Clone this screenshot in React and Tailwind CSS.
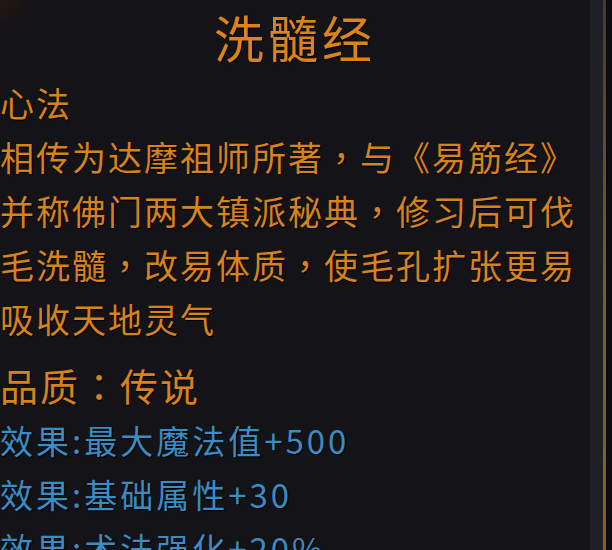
import React from 'react';

const item = {
  name: '洗髓经',
  type: '心法',
  desc: [
    '相传为达摩祖师所著，与《易筋经》',
    '并称佛门两大镇派秘典，修习后可伐',
    '毛洗髓，改易体质，使毛孔扩张更易',
    '吸收天地灵气',
  ],
  quality: '传说',
  effects: ['效果:最大魔法值+500', '效果:基础属性+30', '效果:术法强化+20%'],
};

const font = { fontFamily: '"Noto Sans CJK SC", "Noto Sans", sans-serif' };

// full-width punctuation sits centred in its cell, as in the TC face
function Punct({ text }) {
  return text.split(/([，：])/).map((part, i) =>
    part === '，' || part === '：' ? (
      <span key={i} style={{ fontFamily: '"Noto Sans CJK TC", sans-serif' }}>
        {part}
      </span>
    ) : (
      part
    )
  );
}

export default function App() {
  return (
    <div
      className="w-[612px] h-[550px] overflow-hidden flex bg-[#0d0c0f]"
      style={font}
    >
      {/* tooltip body */}
      <div className="w-[590px] h-full bg-[#141317] bg-[radial-gradient(circle_at_0%_0%,#24170f_0%,transparent_30px)] [text-shadow:1px_1px_1px_#000]">
        <div className="h-[73px] text-center text-[50px] leading-[73px] tracking-[4px] text-[#dc8419]">
          {item.name}
        </div>

        <div className="mt-[3px] text-[34px] leading-[54px] tracking-[2px] text-[#d8821b]">
          <div>{item.type}</div>
          {item.desc.map((line) => (
            <div key={line} className="whitespace-nowrap">
              <Punct text={line} />
            </div>
          ))}
        </div>

        <div className="mt-[11px] text-[38px] leading-[55px] tracking-[2px] text-[#d8821b]">
          <Punct text={`品质：${item.quality}`} />
        </div>

        <div className="mt-[1px] text-[33px] leading-[54px] tracking-[3px] text-[#3a8cc2]">
          {item.effects.map((e) => (
            <div key={e} className="whitespace-nowrap">
              {e}
            </div>
          ))}
        </div>
      </div>

      {/* frame edge */}
      <div className="flex h-full">
        <div className="w-[13px] h-full bg-[#1f2026]" />
        <div className="w-[3px] h-full bg-[linear-gradient(#4a3a22,#7a5a28_50%,#8a6028)]" />
        <div className="w-[6px] h-full bg-[#0c0b0d]" />
      </div>
    </div>
  );
}
